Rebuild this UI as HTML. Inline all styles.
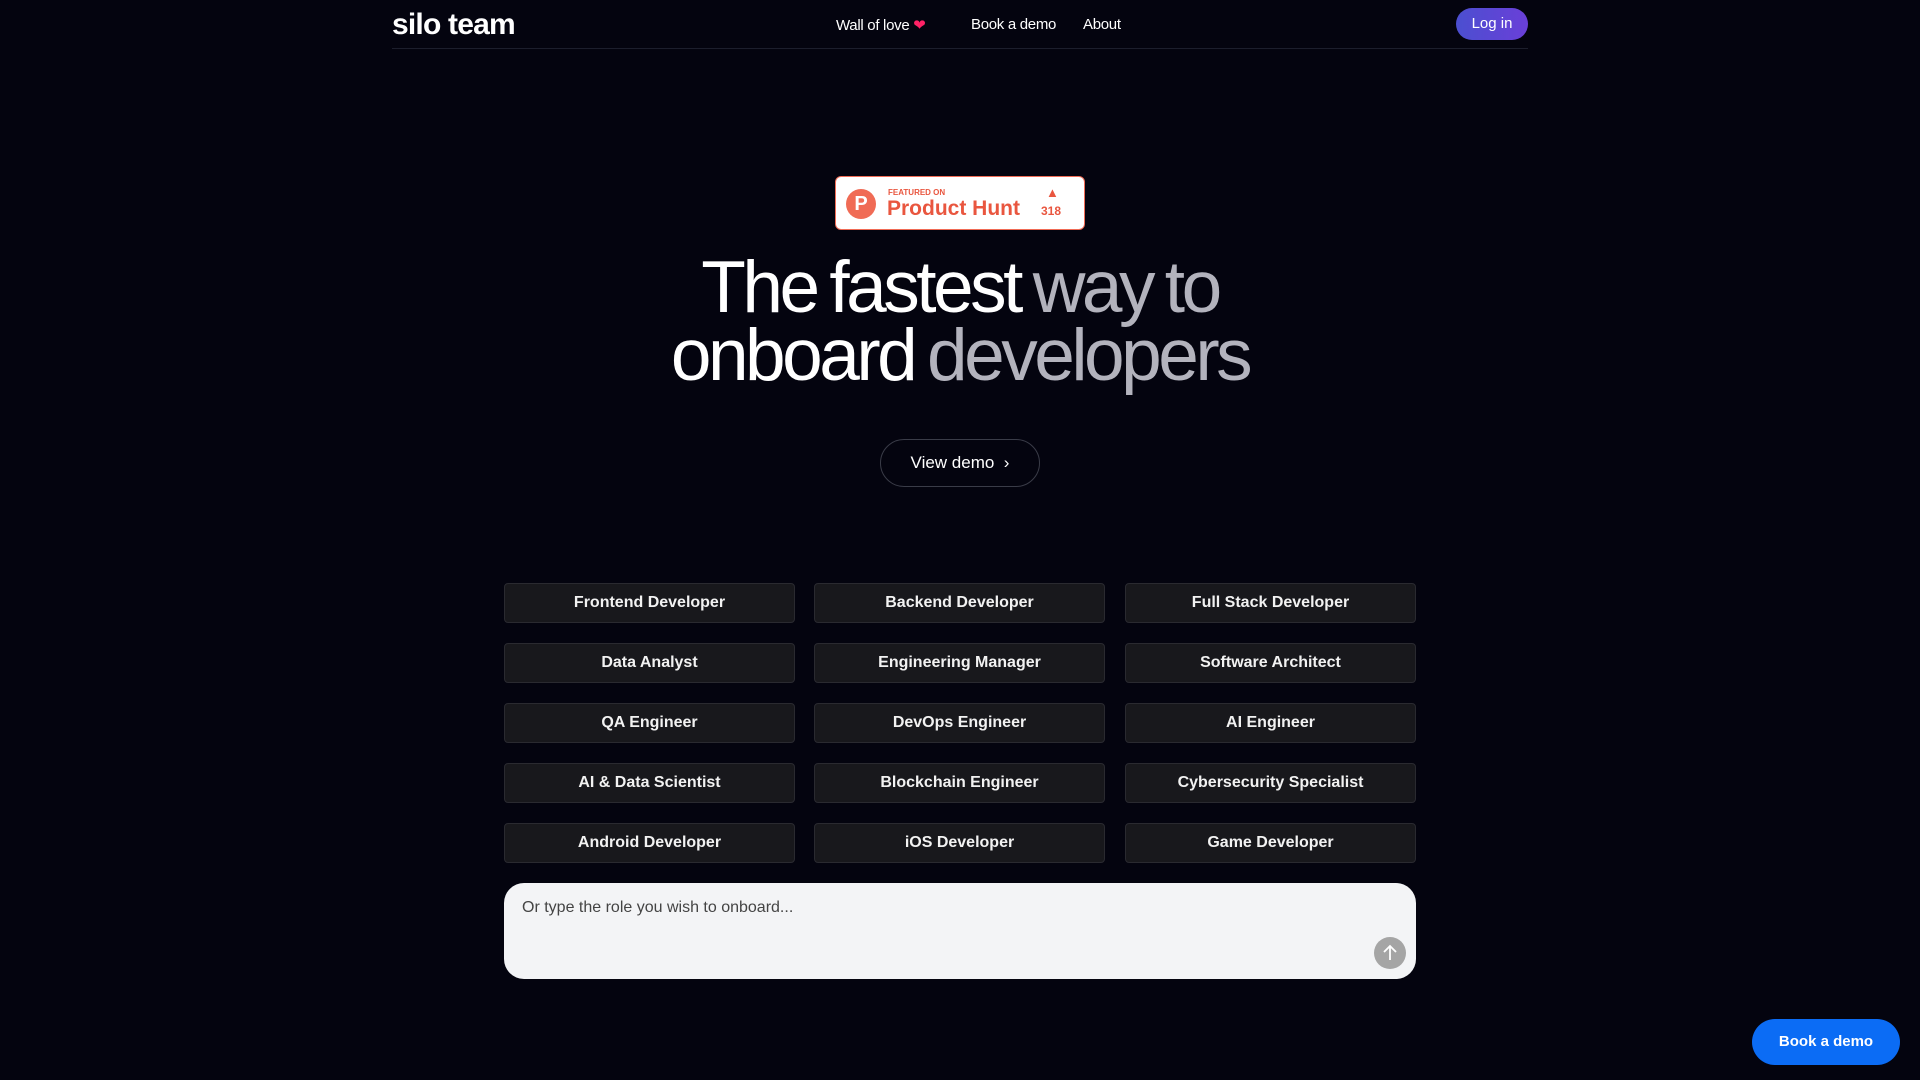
<!DOCTYPE html>
<html><head><meta charset="utf-8"><style>
*{margin:0;padding:0;box-sizing:border-box}
body{width:1920px;height:1080px;background:#04040f;font-family:"Liberation Sans",sans-serif;color:#fff;position:relative;overflow:hidden}
.nav{position:absolute;left:392px;top:0;width:1136px;height:49px;border-bottom:1px solid #1c1e2c}
.logo{position:absolute;left:0;top:8px;font-size:30px;font-weight:700;letter-spacing:-0.8px}
.links{position:absolute;left:444px;top:16px;font-size:15px;letter-spacing:-0.3px}
.links span{position:absolute;white-space:nowrap}
.login{position:absolute;right:0;top:8px;width:72px;height:32px;border-radius:16px;background:linear-gradient(90deg,#4b4fd0,#6a3fd8);font-size:15px;text-align:center;line-height:32px}
.ph{position:absolute;left:835px;top:176px;width:250px;height:54px;background:#fff;border:1px solid #f06b55;border-radius:6px;color:#e9563f}
.ph .c{position:absolute;left:10px;top:12px;width:30px;height:30px;border-radius:50%;background:#f06b55;color:#fff;font-weight:700;font-size:20px;text-align:center;line-height:30px}
h1{position:absolute;left:0;width:1920px;top:254px;text-align:center;font-weight:400;font-size:73px;line-height:68px;letter-spacing:-3.5px;word-spacing:-4px}
.g{color:#b3b3bd}
.demo{position:absolute;left:880px;top:439px;width:160px;height:48px;border:1px solid #3a3c48;border-radius:24px;font-size:17px;line-height:46px;text-align:center}
.b{position:absolute;width:291px;height:40px;background:#18181c;border:1px solid #2a2a30;border-radius:4px;font-size:16px;font-weight:700;text-align:center;line-height:38px;color:#f2f2f2}
.ta{position:absolute;left:504px;top:883px;width:912px;height:96px;background:#f3f4f6;border-radius:20px;color:#444;font-size:16px;padding:16px 18px}
.send{position:absolute;left:1374px;top:937px;width:32px;height:32px;border-radius:50%;background:#a5a5a5}
.fb{position:absolute;left:1752px;top:1019px;width:148px;height:46px;border-radius:23px;background:#0b6cf5;font-size:15px;font-weight:700;text-align:center;line-height:46px}
</style></head><body>
<div class="nav">
<div class="logo">silo team</div>
<div class="links"><span style="left:0">Wall of love <span style="color:#f26;position:static">&#10084;</span></span><span style="left:135px">Book a demo</span><span style="left:247px">About</span></div>
<div class="login">Log in</div>
</div>
<div class="ph"><div class="c">P</div>
<div style="position:absolute;left:52px;top:11px;font-size:8px;font-weight:700">FEATURED ON</div>
<div style="position:absolute;left:51px;top:20px;font-size:21px;font-weight:700">Product Hunt</div>
<div style="position:absolute;left:210px;top:8px;font-size:13px">&#9650;</div>
<div style="position:absolute;left:205px;top:27px;font-size:12px;font-weight:700">318</div>
</div>
<h1>The fastest <span class="g">way to</span><br>onboard <span class="g">developers</span></h1>
<div class="demo">View demo &nbsp;›</div>
<div class="b" style="left:504px;top:583px">Frontend Developer</div>
<div class="b" style="left:814px;top:583px">Backend Developer</div>
<div class="b" style="left:1125px;top:583px">Full Stack Developer</div>
<div class="b" style="left:504px;top:643px">Data Analyst</div>
<div class="b" style="left:814px;top:643px">Engineering Manager</div>
<div class="b" style="left:1125px;top:643px">Software Architect</div>
<div class="b" style="left:504px;top:703px">QA Engineer</div>
<div class="b" style="left:814px;top:703px">DevOps Engineer</div>
<div class="b" style="left:1125px;top:703px">AI Engineer</div>
<div class="b" style="left:504px;top:763px">AI &amp; Data Scientist</div>
<div class="b" style="left:814px;top:763px">Blockchain Engineer</div>
<div class="b" style="left:1125px;top:763px">Cybersecurity Specialist</div>
<div class="b" style="left:504px;top:823px">Android Developer</div>
<div class="b" style="left:814px;top:823px">iOS Developer</div>
<div class="b" style="left:1125px;top:823px">Game Developer</div>
<div class="ta">Or type the role you wish to onboard...</div>
<div class="send"><svg width="32" height="32"><path d="M16 23V9M10 15l6-6 6 6" stroke="#fff" stroke-width="1.8" fill="none"/></svg></div>
<div class="fb">Book a demo</div>
</body></html>
